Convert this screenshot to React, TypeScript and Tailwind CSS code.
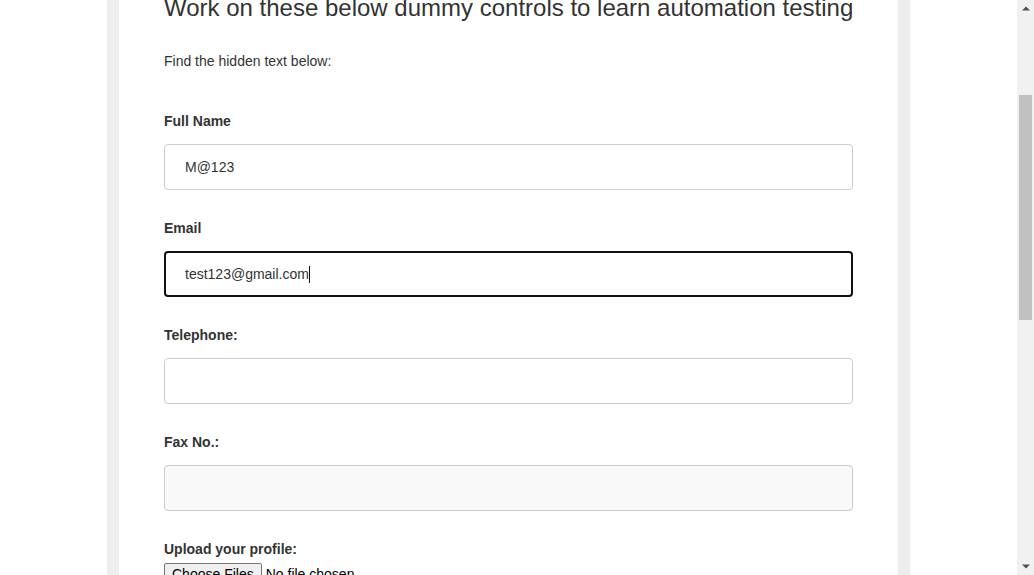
const fieldLabel = "block text-[14px] leading-[20px] font-bold text-[#333]";
const boxBase = "h-[46px] w-full rounded-[4px] flex items-center text-[14px] text-[#333]";

function Field({ label, children, last }: { label: string; children: React.ReactNode; last?: boolean }) {
  return (
    <div className={last ? "" : "mb-[28px]"}>
      <label className={fieldLabel}>{label}</label>
      <div className="mt-[13px]">{children}</div>
    </div>
  );
}

function Scrollbar() {
  return (
    <div className="w-[17px] h-full bg-[#f1f1f1] flex flex-col items-center shrink-0">
      <div className="h-[17px] w-full flex items-center justify-center">
        <svg width="8" height="5" viewBox="0 0 8 5">
          <path d="M0 4.5 L4 0.5 L8 4.5 Z" fill="#505050" />
        </svg>
      </div>
      <div className="h-[78px]" />
      <div className="w-[13px] h-[225px] bg-[#c1c1c1]" />
      <div className="flex-1" />
      <div className="h-[17px] w-full flex items-center justify-center">
        <svg width="8" height="5" viewBox="0 0 8 5">
          <path d="M0 0.5 L4 4.5 L8 0.5 Z" fill="#505050" />
        </svg>
      </div>
    </div>
  );
}

export default function App() {
  return (
    <div
      className="h-[575px] w-[1034px] overflow-hidden flex bg-white"
      style={{ fontFamily: '"Liberation Sans", Arial, sans-serif' }}
    >
      <div className="flex-1 flex justify-center overflow-hidden">
        <div className="w-[803px] h-full border-x-[12px] border-[#eeeeee] bg-white px-[45px]">
          <h2 className="-mt-[5px] text-[24px] leading-[26px] font-normal text-[#333] whitespace-nowrap">
            Work on these below dummy controls to learn automation testing
          </h2>
          <p className="mt-[30px] text-[14px] leading-[20px] text-[#333]">Find the hidden text below:</p>
          <div className="mt-[40px]">
            <Field label="Full Name">
              <div className={`${boxBase} border border-[#cccccc] bg-white pl-[20px]`}>M@123</div>
            </Field>
            <Field label="Email">
              <div className={`${boxBase} border-2 border-[#101010] bg-white pl-[19px]`}>
                <span>test123@gmail.com</span>
                <span className="inline-block w-px h-[17px] bg-[#101010]" />
              </div>
            </Field>
            <Field label="Telephone:">
              <div className={`${boxBase} border border-[#cccccc] bg-white pl-[20px]`} />
            </Field>
            <Field label="Fax No.:">
              <div className={`${boxBase} border border-[#cccccc] bg-[#f9f9f9] pl-[20px]`} />
            </Field>
            <Field label="Upload your profile:" last>
              <div className="-mt-[9px] flex items-center text-[14px]">
                <div className="h-[22px] px-[7px] rounded-[2px] border border-[#767676] bg-[#efefef] text-black flex items-center">
                  Choose Files
                </div>
                <span className="ml-[4px] text-black">No file chosen</span>
              </div>
            </Field>
          </div>
        </div>
      </div>
      <Scrollbar />
    </div>
  );
}
